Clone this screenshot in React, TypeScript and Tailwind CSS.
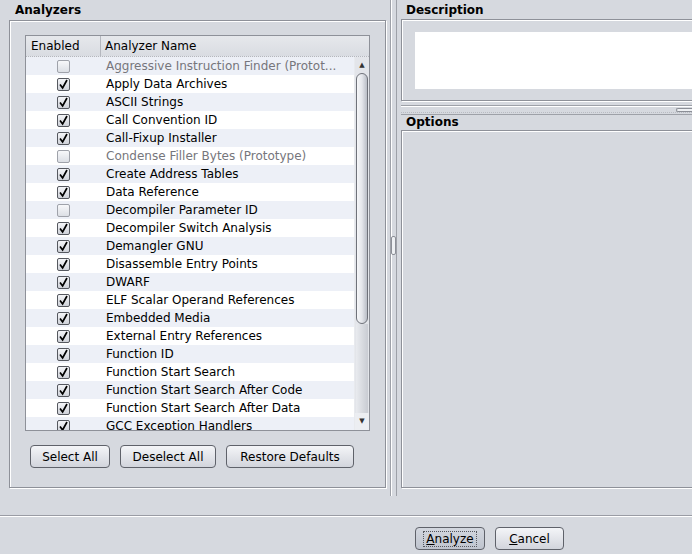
import React from "react"

type Row = { name: string; checked: boolean; proto?: boolean }

const rows: Row[] = [
  { name: "Aggressive Instruction Finder (Protot...", checked: false, proto: true },
  { name: "Apply Data Archives", checked: true },
  { name: "ASCII Strings", checked: true },
  { name: "Call Convention ID", checked: true },
  { name: "Call-Fixup Installer", checked: true },
  { name: "Condense Filler Bytes (Prototype)", checked: false, proto: true },
  { name: "Create Address Tables", checked: true },
  { name: "Data Reference", checked: true },
  { name: "Decompiler Parameter ID", checked: false },
  { name: "Decompiler Switch Analysis", checked: true },
  { name: "Demangler GNU", checked: true },
  { name: "Disassemble Entry Points", checked: true },
  { name: "DWARF", checked: true },
  { name: "ELF Scalar Operand References", checked: true },
  { name: "Embedded Media", checked: true },
  { name: "External Entry References", checked: true },
  { name: "Function ID", checked: true },
  { name: "Function Start Search", checked: true },
  { name: "Function Start Search After Code", checked: true },
  { name: "Function Start Search After Data", checked: true },
  { name: "GCC Exception Handlers", checked: true },
]

const CheckBox = ({ checked }: { checked: boolean }) => {
  if (!checked) {
    return (
      <div className="w-[13px] h-[13px] rounded-[2px] border border-[#9fa2aa] bg-gradient-to-b from-[#f7f8fa] to-[#dcdfe5]" />
    )
  }
  return (
    <div className="w-[13px] h-[13px] rounded-[2px] border border-[#55585f] bg-gradient-to-b from-[#f4f5f8] to-[#cfd2d9] flex items-center justify-center">
      <svg width="11" height="11" viewBox="0 0 11 11">
        <path d="M2 5.5 L4.6 9 L9 1" fill="none" stroke="#000" strokeWidth="1.7" />
      </svg>
    </div>
  )
}

const Button = ({ label, width, focused }: { label: React.ReactNode; width: string; focused?: boolean }) => (
  <div
    className={`${width} h-[23px] rounded-[4px] border border-[#5f626a] flex items-center justify-center ${
      focused
        ? "bg-gradient-to-b from-[#d3d7df] to-[#bfc4ce]"
        : "bg-gradient-to-b from-[#f4f5f8] to-[#d2d5dc]"
    }`}
  >
    {focused ? (
      <div className="border border-dotted border-[#55585f] px-[2px] leading-[14px]">{label}</div>
    ) : (
      <span className="leading-[14px]">{label}</span>
    )}
  </div>
)

const GroupBox = ({ className, children }: { className: string; children?: React.ReactNode }) => (
  <div className={`border border-[#8e9199] shadow-[inset_1px_1px_0_#fff,1px_1px_0_#fff] ${className}`}>{children}</div>
)

export default function App() {
  return (
    <div className="w-[692px] h-[554px] overflow-hidden bg-[#d6d9df] text-[12px] text-black font-['DejaVu_Sans',sans-serif]">
      <div className="flex h-[516px] border-b border-[#9a9ca4] shadow-[0_1px_0_#fff]">
        {/* analyzers panel */}
        <div className="w-[388px] shrink-0 pl-[9px] pt-[4px]">
          <div className="ml-[6px] h-[16px] leading-[13px] font-bold">Analyzers</div>
          <GroupBox className="w-[377px] h-[468px] px-[15px] pt-[14px]">
            <div className="w-[345px] h-[396px] border border-[#8e9199] bg-white flex flex-col overflow-hidden">
              <div className="h-[21px] shrink-0 flex bg-gradient-to-b from-[#e6e8ec] to-[#d9dce2] border-b border-dotted border-[#b4b7be]">
                <div className="w-[75px] pl-[5px] leading-[20px] border-r border-[#b4b7be]">Enabled</div>
                <div className="pl-[4px] leading-[20px]">Analyzer Name</div>
              </div>
              <div className="flex flex-1 min-h-0">
                <div className="flex-1 overflow-hidden">
                  {rows.map((r, i) => (
                    <div key={r.name} className={`h-[18px] flex items-center ${i % 2 === 0 ? "bg-[#edf0f7]" : "bg-white"}`}>
                      <div className="w-[75px] flex justify-center">
                        <CheckBox checked={r.checked} />
                      </div>
                      <div className={`pl-[5px] whitespace-nowrap ${r.proto ? "text-[#76767c]" : ""}`}>{r.name}</div>
                    </div>
                  ))}
                </div>
                {/* scrollbar */}
                <div className="w-[15px] shrink-0 flex flex-col bg-[#e3e5ea] border-l border-[#e8eaee]">
                  <div className="h-[16px] flex items-center justify-center text-[7px] text-[#333]">▲</div>
                  <div className="h-[251px] mx-[1px] rounded-[6px] border border-[#6f727a] bg-gradient-to-r from-[#f6f7f9] via-[#e4e6eb] to-[#b9bdc6]" />
                  <div className="flex-1 mx-[1px] bg-gradient-to-r from-[#e9ebef] to-[#c9ccd3]" />
                  <div className="h-[17px] flex items-center justify-center text-[7px] text-[#333] bg-[#eceef2]">▼</div>
                </div>
              </div>
            </div>
            <div className="flex gap-[10px] ml-[5px] mt-[14px]">
              <Button label="Select All" width="w-[80px]" />
              <Button label="Deselect All" width="w-[96px]" />
              <Button label="Restore Defaults" width="w-[128px]" />
            </div>
          </GroupBox>
        </div>

        {/* vertical splitter */}
        <div className="w-[10px] shrink-0 h-[496px]">
          <div className="ml-[2px] w-[7px] h-full border-x border-[#9ea1a8] shadow-[inset_1px_0_0_#fff] flex justify-center pt-[236px]">
            <div className="w-[5px] h-[19px] rounded-[2px] border border-[#8c8f97] bg-[#eef0f3]" />
          </div>
        </div>

        {/* right side */}
        <div className="flex-1 min-w-0 overflow-hidden pl-[3px] pt-[4px]">
          <div className="ml-[5px] h-[15px] leading-[13px] font-bold">Description</div>
          <GroupBox className="w-[320px] h-[82px] pl-[13px] pt-[12px]">
            <div className="h-[57px] bg-white" />
          </GroupBox>
          <div className="h-[10px] mt-[4px] border-t border-b border-[#9ea1a8] shadow-[inset_0_1px_0_#fff] relative">
            <div className="absolute left-0 right-0 top-[6px] border-t border-dotted border-[#b8bbc2]" />
            <div className="absolute right-0 top-[2px] w-[16px] h-[4px] rounded-l-[2px] border border-r-0 border-[#8c8f97] bg-[#eef0f3]" />
          </div>
          <div className="ml-[5px] h-[15px] pt-[1px] leading-[13px] font-bold">Options</div>
          <GroupBox className="w-[320px] h-[358px]" />
        </div>
      </div>

      {/* bottom buttons */}
      <div className="flex gap-[10px] pl-[415px] pt-[11px]">
        <Button
          focused
          width="w-[70px]"
          label={
            <>
              <span className="underline">A</span>nalyze
            </>
          }
        />
        <Button
          width="w-[69px]"
          label={
            <>
              <span className="underline">C</span>ancel
            </>
          }
        />
      </div>
    </div>
  )
}
